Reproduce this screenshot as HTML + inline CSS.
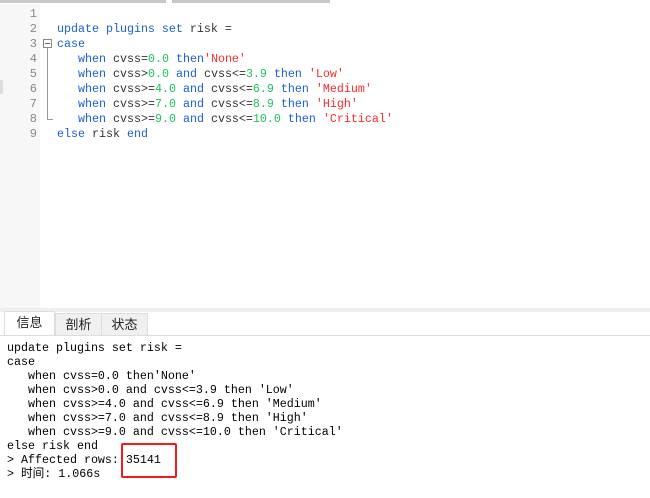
<!DOCTYPE html>
<html><head><meta charset="utf-8"><style>
body{margin:0;width:650px;height:498px;background:#fff;position:relative;overflow:hidden;font-family:"Liberation Mono","Noto Sans CJK SC",monospace;}
.t1{position:absolute;top:0;height:3px;background:#c8c8c8}
.gut{position:absolute;left:0;top:4px;width:40px;height:304px;background:#f7f7f7}
.ln{position:absolute;left:0;width:37px;text-align:right;color:#888;font-size:12px;line-height:15px}
.code{position:absolute;left:57px;top:7px;font-size:11.67px;line-height:15px;color:#333;white-space:pre}
.k{color:#1a5fd6}.n{color:#1ec35a}.s{color:#ff2a2a}
.band{position:absolute;left:0;top:308px;width:650px;height:4px;background:#efefef}
.tab{position:absolute;top:313px;height:22px;font-size:13px;line-height:22px;text-align:center;font-family:"Liberation Sans","Noto Sans CJK SC",sans-serif;color:#222;border:1px solid #ddd;border-bottom:none;background:#f0f0f0;box-sizing:border-box}
.tline{position:absolute;left:0;top:335px;width:650px;height:1px;background:#ddd}
.out{position:absolute;left:7px;top:341px;font-size:11.67px;line-height:14px;color:#000;white-space:pre}
.box{position:absolute;left:121px;top:443px;width:56px;height:35px;border:2px solid #f21c1c;border-radius:2px;box-sizing:border-box}
</style></head><body>
<div class="t1" style="left:0;width:166px"></div>
<div class="t1" style="left:172px;width:158px"></div>
<div class="gut"></div>
<div style="position:absolute;left:0;top:80px;width:3px;height:14px;background:#ddd"></div>
<div class="ln" style="top:7px">1<br>2<br>3<br>4<br>5<br>6<br>7<br>8<br>9</div>
<div style="position:absolute;left:43px;top:39px;width:9px;height:9px;border:1px solid #888;box-sizing:border-box;background:#fff"></div>
<div style="position:absolute;left:45px;top:43px;width:5px;height:1px;background:#666"></div>
<div style="position:absolute;left:47px;top:48px;width:1px;height:71px;background:#999"></div>
<div style="position:absolute;left:47px;top:119px;width:6px;height:1px;background:#999"></div>
<div class="code">
<span class="k">update plugins set</span> risk =
<span class="k">case</span>
   <span class="k">when</span> cvss=<span class="n">0.0</span> <span class="k">then</span><span class="s">'None'</span>
   <span class="k">when</span> cvss&gt;<span class="n">0.0</span> <span class="k">and</span> cvss&lt;=<span class="n">3.9</span> <span class="k">then</span> <span class="s">'Low'</span>
   <span class="k">when</span> cvss&gt;=<span class="n">4.0</span> <span class="k">and</span> cvss&lt;=<span class="n">6.9</span> <span class="k">then</span> <span class="s">'Medium'</span>
   <span class="k">when</span> cvss&gt;=<span class="n">7.0</span> <span class="k">and</span> cvss&lt;=<span class="n">8.9</span> <span class="k">then</span> <span class="s">'High'</span>
   <span class="k">when</span> cvss&gt;=<span class="n">9.0</span> <span class="k">and</span> cvss&lt;=<span class="n">10.0</span> <span class="k">then</span> <span class="s">'Critical'</span>
<span class="k">else</span> risk <span class="k">end</span></div>
<div class="band"></div>
<div class="tline"></div>
<div class="tab" style="left:4px;width:51px;background:#fff;height:24px;top:311px;line-height:22px">信息</div>
<div class="tab" style="left:55px;width:47px">剖析</div>
<div class="tab" style="left:101px;width:47px">状态</div>
<div class="out">update plugins set risk =
case
   when cvss=0.0 then'None'
   when cvss&gt;0.0 and cvss&lt;=3.9 then 'Low'
   when cvss&gt;=4.0 and cvss&lt;=6.9 then 'Medium'
   when cvss&gt;=7.0 and cvss&lt;=8.9 then 'High'
   when cvss&gt;=9.0 and cvss&lt;=10.0 then 'Critical'
else risk end
&gt; Affected rows: 35141
&gt; 时间: 1.066s</div>
<div class="box"></div>
</body></html>
